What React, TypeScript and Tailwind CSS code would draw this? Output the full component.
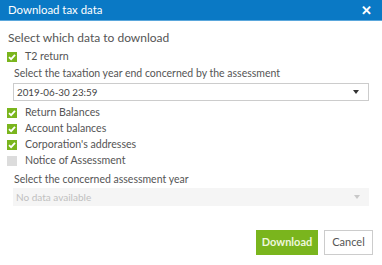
import React from "react";

const Check = ({ on }: { on: boolean }) =>
  on ? (
    <span className="w-[10px] h-[10px] bg-[#7ab51d] flex items-center justify-center shrink-0">
      <svg width="8" height="8" viewBox="0 0 8 8">
        <path d="M1 4.2 L3.1 6.2 L7 1.8" stroke="white" strokeWidth="1.8" fill="none" />
      </svg>
    </span>
  ) : (
    <span className="w-[10px] h-[10px] bg-[#dcdcdc] shrink-0" />
  );

const Row = ({ on, label }: { on: boolean; label: string }) => (
  <div className="h-[16px] flex items-center gap-[8px] pl-[7px]">
    <Check on={on} />
    <span className="text-[10.6px] text-[#555]">{label}</span>
  </div>
);

const Arrow = ({ color }: { color: string }) => (
  <svg width="6" height="4" viewBox="0 0 6 4">
    <path d="M0 0 L6 0 L3 4 Z" fill={color} />
  </svg>
);

export default function App() {
  return (
    <div
      className="w-[382px] h-[265px] bg-white flex flex-col"
      style={{ fontFamily: "Lato, 'Open Sans', sans-serif" }}
    >
      <div className="h-[21px] bg-[#0a79c5] border-b border-[#5aa7dc] flex items-center justify-between pl-[8px] pr-[10px]">
        <span className="text-white text-[11.4px] leading-none">Download tax data</span>
        <span className="text-white text-[13px] font-bold leading-none">✕</span>
      </div>
      <div className="mt-[8px] pl-[8px] text-[12px] text-[#555] leading-[18px]">
        Select which data to download
      </div>
      <div className="mt-[2px]">
        <Row on label="T2 return" />
      </div>
      <div className="pl-[14px] text-[10.5px] text-[#555] h-[17px] flex items-center">
        Select the taxation year end concerned by the assessment
      </div>
      <div className="mx-[13px] mt-[1px] h-[18px] border border-[#ccc] flex items-center justify-between pl-[3px] pr-[9px]">
        <span className="text-[9.8px] text-[#444]">2019-06-30 23:59</span>
        <Arrow color="#333" />
      </div>
      <div className="mt-[4px] flex flex-col">
        <Row on label="Return Balances" />
        <Row on label="Account balances" />
        <Row on label="Corporation's addresses" />
        <Row on={false} label="Notice of Assessment" />
      </div>
      <div className="pl-[14px] text-[10.5px] text-[#555] h-[17px] mt-[2px] flex items-center">
        Select the concerned assessment year
      </div>
      <div className="mx-[13px] h-[18px] bg-[#f5f5f5] flex items-center justify-between pl-[3px] pr-[9px]">
        <span className="text-[10px] text-[#c0c0c0]">No data available</span>
        <Arrow color="#c8c8c8" />
      </div>
      <div className="mt-[24px] flex justify-end gap-[6px] pr-[9px]">
        <button className="w-[62px] h-[25px] bg-[#7ab51d] text-[#eef7dc] text-[11px] font-bold">
          Download
        </button>
        <button className="w-[49px] h-[25px] bg-white border border-[#ccc] text-[#555] text-[11px]">
          Cancel
        </button>
      </div>
    </div>
  );
}
